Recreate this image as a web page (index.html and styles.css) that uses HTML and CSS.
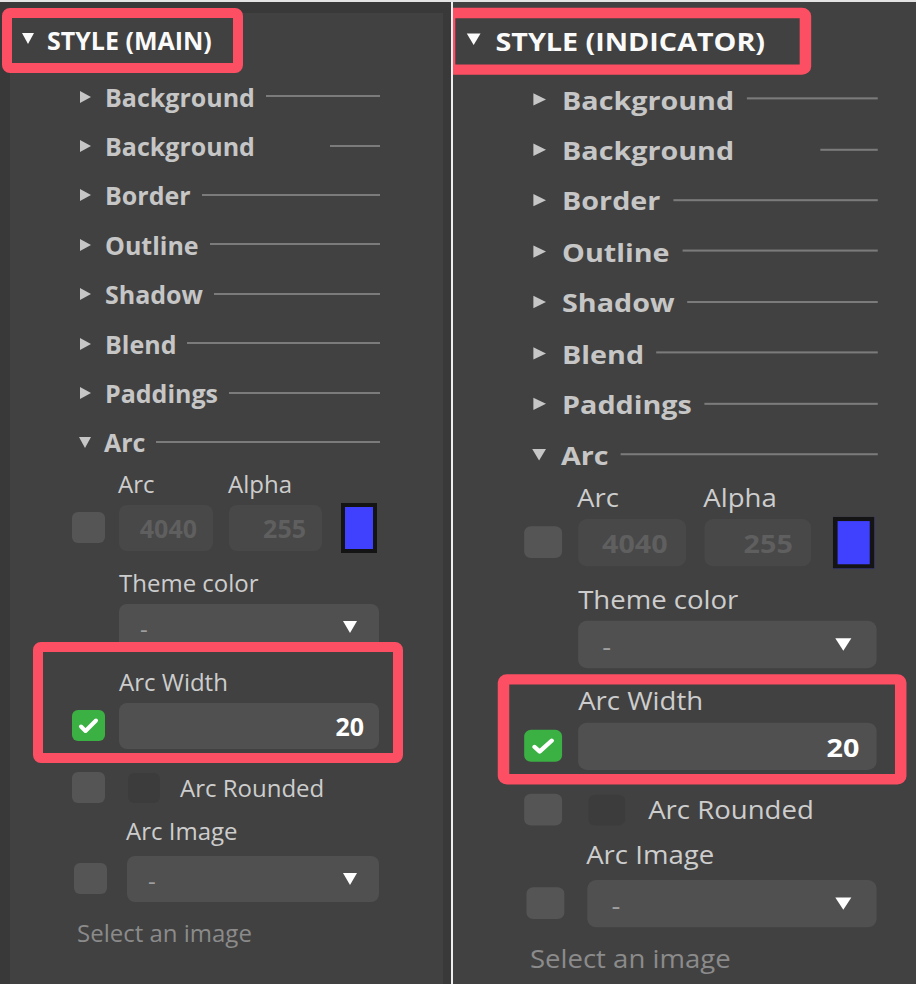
FILE: index.html
```html
<!DOCTYPE html>
<html lang="en">
<head>
    <meta charset="UTF-8">
    <meta name="viewport" content="width=device-width, initial-scale=1.0">
    <title>Style Panels</title>
    <link rel="stylesheet" href="styles.css">
</head>
<body>
<div class="screen">

    <div class="shot shot-main">
        <div class="panel">
            <div class="head"><span class="caret-head"></span>STYLE (MAIN)</div>
            <div class="sections">
                <div class="sec"><span class="caret-right"></span>Background<span class="rule"></span></div>
                <div class="sec"><span class="caret-right"></span>Background<span class="rule rule-short"></span></div>
                <div class="sec"><span class="caret-right"></span>Border<span class="rule"></span></div>
                <div class="sec"><span class="caret-right"></span>Outline<span class="rule"></span></div>
                <div class="sec"><span class="caret-right"></span>Shadow<span class="rule"></span></div>
                <div class="sec"><span class="caret-right"></span>Blend<span class="rule"></span></div>
                <div class="sec"><span class="caret-right"></span>Paddings<span class="rule"></span></div>
                <div class="sec"><span class="caret-down"></span>Arc<span class="rule"></span></div>
            </div>
            <div class="arc-body">
                <div class="color-grid">
                    <span class="field-label col-a">Arc</span>
                    <span class="field-label col-b">Alpha</span>
                    <span class="checkbox col-box"></span>
                    <span class="num-input is-disabled col-a">4040</span>
                    <span class="num-input is-disabled col-b">255</span>
                    <span class="swatch col-c"></span>
                </div>
                <div class="field-label indent theme-label">Theme color</div>
                <div class="select indent theme-select"><span>-</span><span class="select-caret"></span></div>
                <div class="field-label indent width-label">Arc Width</div>
                <div class="check-row">
                    <span class="checkbox is-checked">
                        <svg viewBox="0 0 33 31" width="33" height="31"><path d="M9 16.5l4.5 4.5L24 10.5" fill="none" stroke="#fff" stroke-width="4" stroke-linecap="round" stroke-linejoin="round"/></svg>
                    </span>
                    <span class="num-input wide">20</span>
                </div>
                <div class="toggle-row">
                    <span class="checkbox"></span>
                    <span class="blank-box"></span>
                    <span class="field-label">Arc Rounded</span>
                </div>
                <div class="field-label image-label">Arc Image</div>
                <div class="image-row">
                    <span class="checkbox"></span>
                    <div class="select image-select"><span>-</span><span class="select-caret"></span></div>
                </div>
                <div class="hint">Select an image</div>
            </div>
            <div class="mark mark-head"></div>
            <div class="mark mark-width"></div>
        </div>
    </div>

    <div class="divider"></div>

    <div class="shot shot-indicator">
        <div class="panel">
            <div class="head"><span class="caret-head"></span>STYLE (INDICATOR)</div>
            <div class="sections">
                <div class="sec"><span class="caret-right"></span>Background<span class="rule"></span></div>
                <div class="sec"><span class="caret-right"></span>Background<span class="rule rule-short"></span></div>
                <div class="sec"><span class="caret-right"></span>Border<span class="rule"></span></div>
                <div class="sec"><span class="caret-right"></span>Outline<span class="rule"></span></div>
                <div class="sec"><span class="caret-right"></span>Shadow<span class="rule"></span></div>
                <div class="sec"><span class="caret-right"></span>Blend<span class="rule"></span></div>
                <div class="sec"><span class="caret-right"></span>Paddings<span class="rule"></span></div>
                <div class="sec"><span class="caret-down"></span>Arc<span class="rule"></span></div>
            </div>
            <div class="arc-body">
                <div class="color-grid">
                    <span class="field-label col-a">Arc</span>
                    <span class="field-label col-b">Alpha</span>
                    <span class="checkbox col-box"></span>
                    <span class="num-input is-disabled col-a">4040</span>
                    <span class="num-input is-disabled col-b">255</span>
                    <span class="swatch col-c"></span>
                </div>
                <div class="field-label indent theme-label">Theme color</div>
                <div class="select indent theme-select"><span>-</span><span class="select-caret"></span></div>
                <div class="field-label indent width-label">Arc Width</div>
                <div class="check-row">
                    <span class="checkbox is-checked">
                        <svg viewBox="0 0 33 31" width="33" height="31"><path d="M9 16.5l4.5 4.5L24 10.5" fill="none" stroke="#fff" stroke-width="4" stroke-linecap="round" stroke-linejoin="round"/></svg>
                    </span>
                    <span class="num-input wide">20</span>
                </div>
                <div class="toggle-row">
                    <span class="checkbox"></span>
                    <span class="blank-box"></span>
                    <span class="field-label">Arc Rounded</span>
                </div>
                <div class="field-label image-label">Arc Image</div>
                <div class="image-row">
                    <span class="checkbox"></span>
                    <div class="select image-select"><span>-</span><span class="select-caret"></span></div>
                </div>
                <div class="hint">Select an image</div>
            </div>
            <div class="mark mark-head"></div>
            <div class="mark mark-width"></div>
        </div>
    </div>

</div>
</body>
</html>
```

FILE: styles.css
```css
* {
    box-sizing: border-box;
}
body {
    margin: 0;
    background-color: #393939;
    border-top: 2px solid #e4e4e4;
    font-family: "Open Sans", "Liberation Sans", sans-serif;
    overflow: hidden;
}
.screen {
    display: flex;
    height: 982px;
}
.shot-main {
    width: 451px;
    padding: 11px 8px 0 10px;
}
.divider {
    width: 2px;
    background-color: #eeeeee;
}
.shot-indicator {
    flex: 1;
    background-color: #414141;
    padding-top: 11px;
    overflow: hidden;
}
/* the second capture is the same panel, shown a bit stretched */
.shot-indicator .panel {
    transform-origin: 0 0;
    transform: scale(1.148, 1.0285);
}
.panel {
    position: relative;
    width: 433px;
    height: 100%;
    background-color: #414141;
}

/* header */
.head {
    display: flex;
    align-items: center;
    gap: 13px;
    height: 54px;
    padding-left: 12px;
    color: #fafafa;
    font-size: 25px;
    font-weight: 700;
}
.caret-head {
    border-top: 11px solid #fafafa;
    border-left: 6px solid transparent;
    border-right: 6px solid transparent;
    margin-bottom: 4px;
}

/* collapsed sections */
.sections {
    padding: 5px 63px 0 70px;
}
.sec {
    display: flex;
    align-items: center;
    height: 49.4px;
    color: #c6c6c6;
    font-size: 25px;
    font-weight: 700;
}
.caret-right {
    border-left: 11px solid #c6c6c6;
    border-top: 6px solid transparent;
    border-bottom: 6px solid transparent;
    margin: 0 14px 0 0;
}
.caret-down {
    border-top: 11px solid #c6c6c6;
    border-left: 6.5px solid transparent;
    border-right: 6.5px solid transparent;
    margin: 0 13px 0 -1px;
}
.rule {
    flex: 1;
    height: 2px;
    margin: 0 0 1px 11px;
    background-color: #7b7b7b;
}
.rule-short {
    margin-left: 75px;
}

/* arc section */
.arc-body {
    padding-left: 62px;
}
.field-label {
    font-size: 24px;
    line-height: 30px;
    color: #cdcdcd;
}
.indent {
    margin-left: 47px;
}
.color-grid {
    display: grid;
    grid-template-columns: 33px 14px 94px 16px 93px 19px 36px;
    grid-template-rows: 30px 50px;
    row-gap: 4px;
    align-items: center;
    margin-top: 1.8px;
}
.col-box { grid-column: 1; grid-row: 2; }
.col-a { grid-column: 3; }
.col-b { grid-column: 5; }
.col-c { grid-column: 7; grid-row: 2; }
.color-grid .field-label {
    margin-left: -1px;
}
.checkbox {
    display: block;
    width: 33px;
    height: 31px;
    border-radius: 6px;
    background-color: #555555;
}
.checkbox.is-checked {
    background-color: #3bb043;
}
.checkbox svg {
    display: block;
}
.num-input {
    display: flex;
    align-items: center;
    justify-content: flex-end;
    height: 46px;
    padding-right: 15px;
    border-radius: 8px;
    background-color: #505050;
    color: #ffffff;
    font-size: 25px;
    font-weight: 700;
}
.num-input.is-disabled {
    background-color: #484848;
    color: #5f5f5f;
    padding-right: 16px;
}
.num-input.wide {
    width: 260px;
}
.swatch {
    display: block;
    height: 50px;
    border: 4px solid #141414;
    background-color: #4040ff;
}
.select {
    display: flex;
    align-items: center;
    justify-content: space-between;
    height: 46px;
    padding: 0 22px 0 21px;
    border-radius: 8px;
    background-color: #505050;
    color: #9e9e9e;
    font-size: 24px;
}
.select > span:first-child {
    padding-top: 4px;
}
.select-caret {
    border-top: 12px solid #ffffff;
    border-left: 7.5px solid transparent;
    border-right: 7.5px solid transparent;
}
.theme-label {
    margin-top: 15.5px;
}
.theme-select {
    width: 260px;
    margin-top: 5.5px;
}
.width-label {
    margin-top: 17.5px;
}
.check-row {
    display: flex;
    align-items: center;
    gap: 14px;
    margin-top: 5.5px;
}
.toggle-row {
    display: flex;
    align-items: center;
    height: 46px;
    margin-top: 16px;
}
.blank-box {
    width: 32px;
    height: 30px;
    margin: 0 20px 0 23px;
    border-radius: 6px;
    background-color: #3c3c3c;
}
.image-label {
    margin: 5.5px 0 0 54px;
}
.image-row {
    display: flex;
    align-items: center;
    margin-top: 9.5px;
}
.image-row .checkbox {
    margin-left: 2px;
}
.image-select {
    width: 252px;
    margin-left: 20px;
}
.hint {
    margin: 16.5px 0 0 5px;
    font-size: 24px;
    line-height: 30px;
    color: #8b8b8b;
}

/* red highlight frames drawn over the screenshot */
.mark {
    position: absolute;
    border: 10px solid #fd4f63;
    border-radius: 8px;
}
.shot-main .mark-head {
    left: -8px;
    top: -5px;
    width: 241px;
    height: 65px;
}
.shot-main .mark-width {
    left: 23px;
    top: 629px;
    width: 370px;
    height: 121px;
}
.shot-indicator .mark-head {
    left: -8px;
    top: -5px;
    width: 320px;
    height: 65px;
}
.shot-indicator .mark-width {
    left: 39px;
    top: 643px;
    width: 356px;
    height: 107px;
}
```
